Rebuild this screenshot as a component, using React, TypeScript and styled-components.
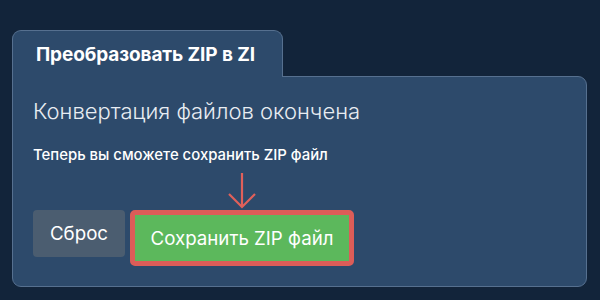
import React from 'react'
import styled, { createGlobalStyle } from 'styled-components'

const Global = createGlobalStyle`
  html, body {
    margin: 0;
    padding: 0;
    background: #12243a;
  }
  body {
    font-family: Inter, "Noto Sans", sans-serif;
    width: 600px;
    height: 300px;
    overflow: hidden;
  }
`

const App = () => {
  return (
    <>
      <Global />
      <Page>
        <Tab>Преобразовать ZIP в ZI</Tab>
        <Panel>
          <Heading>Конвертация файлов окончена</Heading>
          <Note>Теперь вы сможете сохранить ZIP файл</Note>
          <Actions>
            <ResetButton>Сброс</ResetButton>
            <SaveWrap>
              <Arrow width="30" height="38" viewBox="0 0 30 38">
                <path d="M15 1 L15 35 M2 22 L15 35 L28 22" fill="none" stroke="#e0605a" strokeWidth="2.2" />
              </Arrow>
              <SaveButton>Сохранить ZIP файл</SaveButton>
            </SaveWrap>
          </Actions>
        </Panel>
      </Page>
    </>
  )
}

export default App

const Page = styled.div`
  padding: 30px 13px 0 12px;
  display: flex;
  flex-direction: column;
  align-items: flex-start;
`
const Tab = styled.div`
  box-sizing: border-box;
  width: 271px;
  height: 47px;
  background: #2d4a6b;
  border: 1px solid #56708f;
  border-bottom: none;
  border-radius: 9px 9px 0 0;
  color: #ffffff;
  font-weight: 700;
  font-size: 19px;
  letter-spacing: -0.1px;
  line-height: 23px;
  padding: 12px 0 0 23px;
  position: relative;
  z-index: 1;
  margin-bottom: -1px;
  white-space: nowrap;
`
const Panel = styled.div`
  box-sizing: border-box;
  width: 575px;
  height: 211px;
  background: #2d4a6b;
  border: 1px solid #56708f;
  border-radius: 0 9px 9px 9px;
  padding: 21px 20px 0 20px;
`
const Heading = styled.div`
  color: #e8edf2;
  font-size: 22px;
  font-weight: 300;
  line-height: 27px;
`
const Note = styled.div`
  margin-top: 21px;
  color: #ffffff;
  font-size: 14.9px;
  font-weight: 500;
  line-height: 18px;
`
const Actions = styled.div`
  margin-top: 46px;
  display: flex;
  align-items: flex-start;
  gap: 5px;
`
const ResetButton = styled.div`
  box-sizing: border-box;
  width: 92px;
  height: 47px;
  background: #4b5d70;
  border-radius: 4px;
  color: #ffffff;
  font-size: 18.7px;
  display: flex;
  align-items: center;
  justify-content: center;
`
const SaveWrap = styled.div`
  position: relative;
`
const Arrow = styled.svg`
  position: absolute;
  left: 97px;
  top: -38px;
`
const SaveButton = styled.div`
  box-sizing: border-box;
  width: 224px;
  height: 56px;
  background: #5cb85c;
  border: 5px solid #dc5d58;
  border-radius: 5px;
  color: #ffffff;
  font-size: 18.7px;
  display: flex;
  align-items: center;
  justify-content: center;
`
